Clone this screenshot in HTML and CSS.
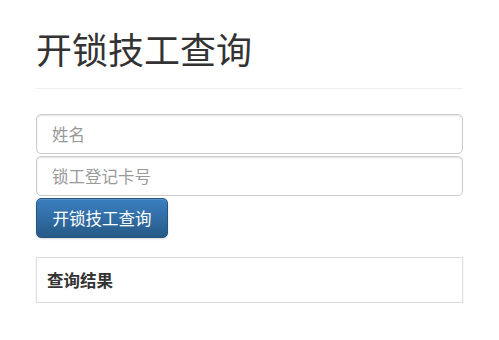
FILE: index.html
```html
<!DOCTYPE html>
<html lang="zh">
<head>
<meta charset="utf-8">
<title>开锁技工查询</title>
<link rel="stylesheet" href="styles.css">
</head>
<body>
<div class="page">
  <h1 class="title">开锁技工查询</h1>
  <hr class="rule">
  <form class="form">
    <input class="field" type="text" placeholder="姓名">
    <input class="field" type="text" placeholder="锁工登记卡号">
    <button class="btn" type="button">开锁技工查询</button>
  </form>
  <div class="panel">
    <div class="panel-title">查询结果</div>
  </div>
</div>
</body>
</html>
```

FILE: styles.css
```css
* { box-sizing: border-box; }
html, body { margin: 0; padding: 0; background: #fff; }
body {
  font-family: "Noto Sans CJK SC", "Noto Sans", sans-serif;
  color: #333;
}
.page {
  width: 427px;
  margin-left: 36px;
  padding-top: 24px;
}
.title {
  margin: 0;
  font-size: 36px;
  font-weight: 400;
  line-height: 48px;
  color: #333;
}
.rule {
  margin: 16px 0 25px;
  border: 0;
  border-top: 1px solid #eee;
  height: 0;
}
.form {
  display: flex;
  flex-direction: column;
  align-items: flex-start;
  gap: 2px;
}
.field {
  width: 100%;
  height: 40px;
  padding: 0 15px;
  border: 1px solid #ccc;
  border-radius: 5px;
  box-shadow: inset 0 1px 2px rgba(0,0,0,.12);
  font-family: inherit;
  font-size: 16.5px;
  color: #555;
  background: #fff;
}
.field::placeholder { color: #999; }
.btn {
  height: 40px;
  width: 132px;
  padding: 0;
  border: 1px solid #245580;
  border-radius: 5px;
  background: linear-gradient(#3b7fc0, #265a88);
  color: #fff;
  font-family: inherit;
  font-size: 16.5px;
  box-shadow: inset 0 1px 0 rgba(255,255,255,.15), 0 1px 2px rgba(0,0,0,.15);
}
.panel {
  margin-top: 19px;
  height: 46px;
  border: 1px solid #ddd;
  box-shadow: 0 1px 2px rgba(0,0,0,.08);
  background: #fff;
  display: flex;
  align-items: center;
  padding: 0 10px;
}
.panel-title {
  font-size: 16.5px;
  font-weight: 700;
  color: #333;
}
```
